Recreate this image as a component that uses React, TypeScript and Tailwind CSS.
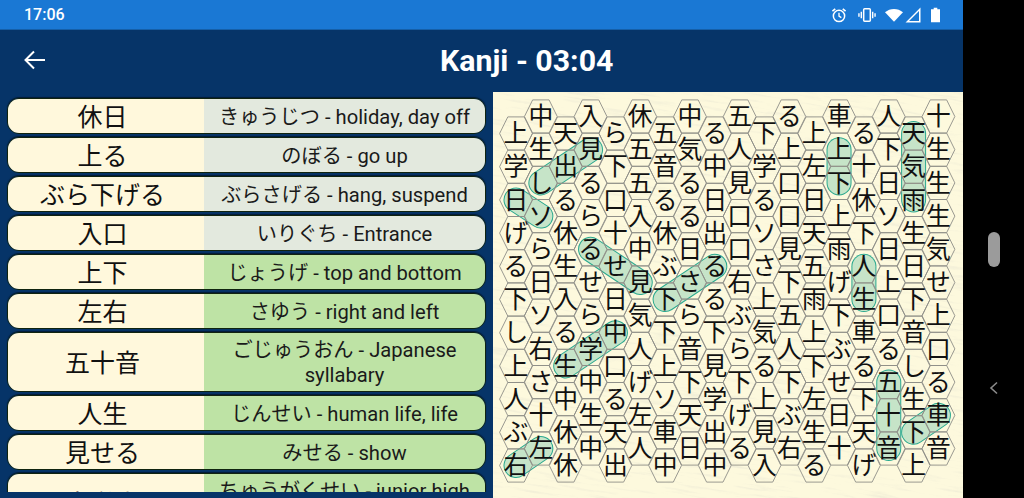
import React from 'react'

const rows = [
  { word: '休日', meaning: 'きゅうじつ - holiday, day off', done: false },
  { word: '上る', meaning: 'のぼる - go up', done: false },
  { word: 'ぶら下げる', meaning: 'ぶらさげる - hang, suspend', done: false },
  { word: '入口', meaning: 'いりぐち - Entrance', done: false },
  { word: '上下', meaning: 'じょうげ - top and bottom', done: true },
  { word: '左右', meaning: 'さゆう - right and left', done: true },
  { word: '五十音', meaning: 'ごじゅうおん - Japanese syllabary', done: true },
  { word: '人生', meaning: 'じんせい - human life, life', done: true },
  { word: '見せる', meaning: 'みせる - show', done: true },
  { word: '中学生', meaning: 'ちゅうがくせい - junior high school student', done: true },
]

// one string per column, top to bottom
const columns = [
  '上学日げる下し上人ぶ右',
  '中生しソら日ソ右さ十左',
  '天出る休生入る生中休休',
  '入見るらるせら学中生中',
  'ら下口十せ日中口る天出',
  '休五五入中見気人げ左人',
  '五音る休ぶ下下上ソ車中',
  '中気るる日さら音下天日',
  'る中日出るる下見学出中',
  '五人見口口右ぶら下げる',
  '下学るソさ上気る上見入',
  'る上口口見下五人下ぶ右',
  '上左日天五雨上下左生る',
  '車上下上雨げ下ぶせ日十',
  'る十休下人生車る下天げ',
  '人下日ソ日上口る五十音',
  '天気雨生日下音し生下上',
  '十生生生気せ上口る車音',
]

const colX = (c: number) => 23 + c * 24.85
const cellY = (c: number, r: number) => (c % 2 === 0 ? 41.5 : 24.5) + r * 33.2

// found words, as [col, row] of first and last cell
const found = [
  [[3, 1], [1, 2]],
  [[0, 2], [1, 3]],
  [[3, 4], [5, 5]],
  [[6, 5], [8, 4]],
  [[4, 6], [2, 7]],
  [[1, 10], [0, 10]],
  [[13, 1], [13, 2]],
  [[16, 0], [16, 2]],
  [[14, 4], [14, 5]],
  [[15, 8], [15, 10]],
  [[17, 9], [16, 9]],
]

const hexPoints = (x: number, y: number) => {
  const w = 16.4
  const h = 16.6
  const s = 8.2
  return `${x - w},${y} ${x - s},${y - h} ${x + s},${y - h} ${x + w},${y} ${x + s},${y + h} ${x - s},${y + h}`
}

const Board = () => (
  <div className="relative flex-1 h-full bg-[#fdf9dd] overflow-hidden">
    <svg width="470" height="406" className="absolute inset-0">
      <filter id="paper" x="0" y="0" width="100%" height="100%">
        <feTurbulence type="fractalNoise" baseFrequency="0.025 0.3" numOctaves="4" seed="11" />
        <feColorMatrix values="0 0 0 0 0.6  0 0 0 0 0.6  0 0 0 0 0.56  1.8 0 0 0 -0.95" />
      </filter>
      <g transform="rotate(9 235 203)">
        <rect x="-60" y="-60" width="590" height="526" filter="url(#paper)" opacity="0.38" />
      </g>
      {found.map(([a, b], i) => {
        const x1 = colX(a[0])
        const y1 = cellY(a[0], a[1])
        const x2 = colX(b[0])
        const y2 = cellY(b[0], b[1])
        return (
          <g key={i}>
            <line x1={x1} y1={y1} x2={x2} y2={y2} stroke="#2aa98f" strokeWidth="25" strokeLinecap="round" />
            <line x1={x1} y1={y1} x2={x2} y2={y2} stroke="#c6e4c8" strokeWidth="23" strokeLinecap="round" />
          </g>
        )
      })}
      {columns.map((col, c) =>
        col.split('').map((_, r) => (
          <polygon key={`${c}-${r}`} points={hexPoints(colX(c), cellY(c, r))} fill="none" stroke="#8f8f88" strokeWidth="0.9" />
        ))
      )}
      {columns.map((col, c) =>
        col.split('').map((ch, r) => (
          <text
            key={`${c}-${r}`}
            x={colX(c)}
            y={cellY(c, r) + 8.7}
            textAnchor="middle"
            fontSize="24.8"
            fill="#111"
            className="font-['Noto_Sans_CJK_JP',sans-serif]"
          >
            {ch}
          </text>
        ))
      )}
    </svg>
  </div>
)

const StatusIcons = () => (
  <div className="flex items-center mr-[23px] text-white">
    {/* alarm */}
    <svg width="16" height="16" viewBox="0 0 17 17" fill="none" stroke="currentColor">
      <circle cx="8.500" cy="9.500" r="6" strokeWidth="1.600" />
      <path d="M8.500 6v3.700l2.500 1.600" strokeWidth="1.400" />
      <path d="M1.500 4.500L4.500 2M15.500 4.500L12.500 2" strokeWidth="1.700" />
    </svg>
    {/* vibrate */}
    <svg width="18" height="16" viewBox="0 0 19 16" fill="none" stroke="currentColor" className="ml-[11px]">
      <rect x="6" y="1.500" width="7" height="13" rx="1" strokeWidth="1.600" />
      <path d="M3.500 4.500v7M15.500 4.500v7M1 6.200v3.600M18 6.200v3.600" strokeWidth="1.500" />
    </svg>
    {/* wifi */}
    <svg width="18" height="14" viewBox="0 0 19 14" fill="currentColor" className="ml-[9px]">
      <path d="M0 4.200C5.300 -0.600 13.700 -0.600 19 4.200L9.500 14Z" />
    </svg>
    {/* signal */}
    <svg width="16" height="16" viewBox="0 0 16 16" fill="currentColor" className="ml-[2px]">
      <path d="M15.500 0.500V15.500H0.500ZM14 4L4 14H14Z" fillRule="evenodd" />
    </svg>
    {/* battery */}
    <svg width="9" height="16" viewBox="0 0 10 16" fill="currentColor" className="ml-[10px]">
      <path d="M3 0h4v1.500h3V16H0V1.500h3Z" />
    </svg>
  </div>
)

export default function App() {
  return (
    <div className="flex w-[1024px] h-[498px] overflow-hidden bg-black font-['Roboto',sans-serif]">
      <div className="flex flex-col w-[963px] h-full">
        {/* status bar */}
        <div className="flex items-center justify-between h-[30px] pl-[24px] bg-[#1a78d4] border-b border-b-[#155fa8]">
          <span className="text-[16px] font-medium text-white">17:06</span>
          <StatusIcons />
        </div>

        {/* app bar */}
        <div className="flex items-center h-[62px] bg-[#063468]">
          <svg width="24" height="24" viewBox="0 0 24 24" fill="none" stroke="white" strokeWidth="2" className="ml-[23px] -mt-[2px]">
            <path d="M22 12H2.500M11 3.500L2.500 12l8.500 8.500" />
          </svg>
          <span className="ml-[393px] text-[30.300px] font-bold text-white">Kanji - 03:04</span>
        </div>

        <div className="flex flex-1 min-h-0 bg-[#063468]">
          {/* word list */}
          <div className="w-[493px] h-[400px] px-[7px] pt-[6px] overflow-hidden flex flex-col gap-[3px]">
            {rows.map((row) => (
              <div
                key={row.word}
                className="flex shrink-0 min-h-[36px] rounded-[12px] overflow-hidden border border-[#10240f] shadow-[0_-1px_1px_rgba(0,0,0,0.5)]"
              >
                <div className="flex items-center justify-center w-[196px] shrink-0 pr-[7px] pb-[2px] bg-[#fff8dc] text-[25px] leading-[32px] text-[#111] font-['Noto_Sans_CJK_JP',sans-serif]">
                  {row.word}
                </div>
                <div
                  className={`flex flex-1 items-center justify-center px-[10px] pt-[5px] pb-[3px] text-center text-[20.200px] leading-[25px] text-[#1a1a1a] font-['Roboto','Noto_Sans_CJK_JP',sans-serif] ${
                    row.done ? 'bg-[#bee3a5]' : 'bg-[#e3e9de]'
                  }`}
                >
                  {row.meaning}
                </div>
              </div>
            ))}
          </div>
          <Board />
        </div>
      </div>

      {/* android nav */}
      <div className="flex flex-col items-center flex-1 pt-[232px]">
        <div className="w-[12px] h-[35px] rounded-full bg-[#9b9b9b]" />
        <svg width="12" height="16" viewBox="0 0 12 16" fill="none" stroke="#8a8a8a" strokeWidth="1.600" className="mt-[113px]">
          <path d="M9 2.500L3 8l6 5.500" />
        </svg>
      </div>
    </div>
  )
}
